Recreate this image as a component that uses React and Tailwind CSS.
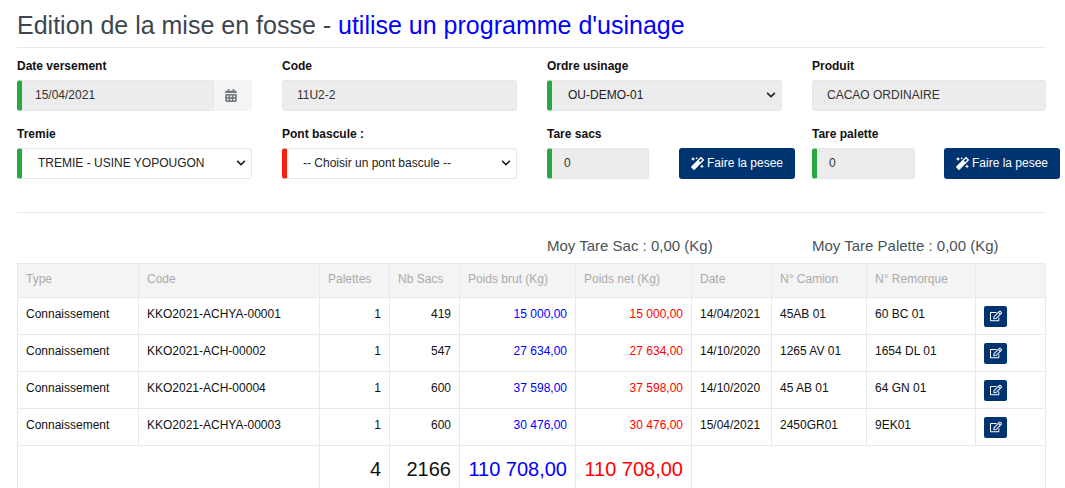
import React from 'react';
import { FaCalendarAlt, FaChevronDown, FaMagic, FaRegEdit } from 'react-icons/fa';

const rows = [
  ['Connaissement', 'KKO2021-ACHYA-00001', '1', '419', '15 000,00', '15 000,00', '14/04/2021', '45AB 01', '60 BC 01'],
  ['Connaissement', 'KKO2021-ACH-00002', '1', '547', '27 634,00', '27 634,00', '14/10/2020', '1265 AV 01', '1654 DL 01'],
  ['Connaissement', 'KKO2021-ACH-00004', '1', '600', '37 598,00', '37 598,00', '14/10/2020', '45 AB 01', '64 GN 01'],
  ['Connaissement', 'KKO2021-ACHYA-00003', '1', '600', '30 476,00', '30 476,00', '15/04/2021', '2450GR01', '9EK01'],
];

const headers = ['Type', 'Code', 'Palettes', 'Nb Sacs', 'Poids brut (Kg)', 'Poids net (Kg)', 'Date', 'N° Camion', 'N° Remorque', ''];

function Label({ children }) {
  return <div className="text-[12px] leading-[16px] font-bold text-[#111] mb-[6px]">{children}</div>;
}

function Field({ children, accent = '', className = '', pad = 'pl-[14px]' }) {
  return (
    <div className={`h-[31px] flex items-center pb-[1px] rounded-[3px] bg-[#ececec] border border-[#e6e6e6] text-[12px] text-[#333] ${pad} ${accent} ${className}`}>
      {children}
    </div>
  );
}

function SelectBox({ children, accent, gray, pad }) {
  return (
    <div className={`h-[31px] flex items-center justify-between pb-[1px] rounded-[3px] border border-[#e6e6e6] border-l-[5px] text-[12px] text-[#222] pr-[5px] ${pad} ${accent} ${gray ? 'bg-[#ececec]' : 'bg-white'}`}>
      <span>{children}</span>
      <FaChevronDown className="w-[10px] h-[10px] text-[#222]" />
    </div>
  );
}

function PeseeButton() {
  return (
    <button className="w-[116px] h-[31px] shrink-0 flex items-center justify-center gap-[3px] pb-[1px] rounded-[3px] bg-[#003471] text-white text-[12px]">
      <FaMagic className="w-[13px] h-[13px]" />
      <span>Faire la pesee</span>
    </button>
  );
}

export default function App() {
  return (
    <div className="h-[488px] overflow-hidden bg-white pl-[17px] font-['Liberation_Sans',Arial,sans-serif]">
      <div className="w-[1029px]">
        {/* Titre */}
        <h1 className="pt-[10px] pb-[7px] text-[25px] leading-[30px] text-[#3d4650] border-b border-[#eaeaea]">
          Edition de la mise en fosse - <span className="text-[#0000ff]">utilise un programme d'usinage</span>
        </h1>

        {/* Formulaire */}
        <div className="grid grid-cols-[265px_265px_265px_234px] mt-[10px] gap-y-[15px]">
          <div className="w-[235px]">
            <Label>Date versement</Label>
            <div className="flex h-[31px] rounded-[3px] bg-[#f4f4f4]">
              <Field accent="border-l-[5px] border-l-[#28a745]" className="w-[197px]" pad="pl-[13px]">15/04/2021</Field>
              <div className="flex-1 flex items-center justify-center pr-[4px]">
                <FaCalendarAlt className="w-[12px] h-[13px] text-[#6f7780]" />
              </div>
            </div>
          </div>
          <div className="w-[235px]">
            <Label>Code</Label>
            <Field>11U2-2</Field>
          </div>
          <div className="w-[235px]">
            <Label>Ordre usinage</Label>
            <SelectBox accent="border-l-[#28a745]" gray pad="pl-[16px]">OU-DEMO-01</SelectBox>
          </div>
          <div>
            <Label>Produit</Label>
            <Field>CACAO ORDINAIRE</Field>
          </div>

          <div className="w-[235px]">
            <Label>Tremie</Label>
            <SelectBox accent="border-l-[#28a745]" pad="pl-[16px]">TREMIE - USINE YOPOUGON</SelectBox>
          </div>
          <div className="w-[235px]">
            <Label>Pont bascule :</Label>
            <SelectBox accent="border-l-[#ff1f10]" pad="pl-[16px]">-- Choisir un pont bascule --</SelectBox>
          </div>
          <div className="w-[248px]">
            <Label>Tare sacs</Label>
            <div className="flex justify-between">
              <Field accent="border-l-[5px] border-l-[#28a745]" className="w-[102px]" pad="pl-[12px]">0</Field>
              <PeseeButton />
            </div>
          </div>
          <div className="w-[248px]">
            <Label>Tare palette</Label>
            <div className="flex justify-between">
              <Field accent="border-l-[5px] border-l-[#28a745]" className="w-[103px]" pad="pl-[12px]">0</Field>
              <PeseeButton />
            </div>
          </div>
        </div>

        <div className="mt-[33px] border-t border-[#eaeaea]" />

        {/* Moyennes */}
        <div className="grid grid-cols-[265px_265px_265px_234px] mt-[24px] h-[26px] text-[15px] leading-[18px] text-[#4a525a]">
          <div />
          <div />
          <div>Moy Tare Sac : 0,00 (Kg)</div>
          <div className="whitespace-nowrap">Moy Tare Palette : 0,00 (Kg)</div>
        </div>

        {/* Tableau */}
        <table className="w-[1028px] table-fixed border-collapse text-[12px] text-[#111]">
          <colgroup>
            <col className="w-[121px]" />
            <col className="w-[181px]" />
            <col className="w-[70px]" />
            <col className="w-[70px]" />
            <col className="w-[116px]" />
            <col className="w-[116px]" />
            <col className="w-[80px]" />
            <col className="w-[95px]" />
            <col className="w-[109px]" />
            <col className="w-[70px]" />
          </colgroup>
          <thead>
            <tr className="h-[34px] bg-[#f4f4f4]">
              {headers.map((h, i) => (
                <th key={i} className="border border-[#e9e9e9] px-[8px] pb-[3px] text-left font-normal text-[#aaa] whitespace-nowrap">{h}</th>
              ))}
            </tr>
          </thead>
          <tbody>
            {rows.map((r, i) => (
              <tr key={i} className="h-[37px]">
                <td className="border border-[#e9e9e9] px-[8px] pb-[5px]">{r[0]}</td>
                <td className="border border-[#e9e9e9] px-[8px] pb-[5px]">{r[1]}</td>
                <td className="border border-[#e9e9e9] px-[8px] pb-[5px] text-right">{r[2]}</td>
                <td className="border border-[#e9e9e9] px-[8px] pb-[5px] text-right">{r[3]}</td>
                <td className="border border-[#e9e9e9] px-[8px] pb-[5px] text-right text-[#0000ff]">{r[4]}</td>
                <td className="border border-[#e9e9e9] px-[8px] pb-[5px] text-right text-[#ff0000]">{r[5]}</td>
                <td className="border border-[#e9e9e9] px-[8px] pb-[5px]">{r[6]}</td>
                <td className="border border-[#e9e9e9] px-[8px] pb-[5px]">{r[7]}</td>
                <td className="border border-[#e9e9e9] px-[8px] pb-[5px]">{r[8]}</td>
                <td className="border border-[#e9e9e9] px-[8px]">
                  <button className="w-[23px] h-[21px] flex items-center justify-center rounded-[2px] bg-[#003471] text-white">
                    <FaRegEdit className="w-[12px] h-[12px]" />
                  </button>
                </td>
              </tr>
            ))}
            <tr className="h-[46px] text-[20px]">
              <td colSpan={2} className="border border-[#e9e9e9]" />
              <td className="border border-[#e9e9e9] px-[8px] text-right">4</td>
              <td className="border border-[#e9e9e9] px-[8px] text-right">2166</td>
              <td className="border border-[#e9e9e9] px-[8px] text-right text-[#0000ff] whitespace-nowrap">110 708,00</td>
              <td className="border border-[#e9e9e9] px-[8px] text-right text-[#ff0000] whitespace-nowrap">110 708,00</td>
              <td colSpan={4} className="border border-[#e9e9e9]" />
            </tr>
          </tbody>
        </table>
      </div>
    </div>
  );
}
